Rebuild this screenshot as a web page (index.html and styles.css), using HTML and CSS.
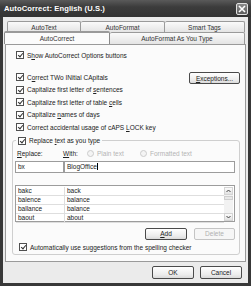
FILE: index.html
```html
<!DOCTYPE html>
<html lang="en">
<head>
  <meta charset="UTF-8">
  <title>AutoCorrect: English (U.S.)</title>
  <link rel="stylesheet" href="styles.css">
</head>
<body>
  <div class="window">
    <div class="titlebar">
      <span class="title">AutoCorrect: English (U.S.)</span>
      <span class="close">
        <svg width="8" height="8" viewBox="0 0 8 8"><path d="M1 1 L7 7 M7 1 L1 7" stroke="#fff" stroke-width="1.6"/></svg>
      </span>
    </div>

    <div class="client">
      <div class="tabrow back">
        <div class="tab t-autotext">AutoText</div>
        <div class="tab t-autoformat">AutoFormat</div>
        <div class="tab t-smarttags">Smart Tags</div>
      </div>
      <div class="tabrow front">
        <div class="tab t-autocorrect active">AutoCorrect</div>
        <div class="tab t-asyoutype">AutoFormat As You Type</div>
      </div>

      <div class="panel">
        <div class="check first"><span class="box on"></span><span>S<u>h</u>ow AutoCorrect Options buttons</span></div>

        <div class="opts">
          <div class="opt-list">
            <div class="check"><span class="box on"></span><span>C<u>o</u>rrect TWo INitial CApitals</span></div>
            <div class="check"><span class="box on"></span><span>Capitalize first letter of <u>s</u>entences</span></div>
            <div class="check"><span class="box on"></span><span>Capitalize first letter of table <u>c</u>ells</span></div>
            <div class="check"><span class="box on"></span><span>Capitalize <u>n</u>ames of days</span></div>
            <div class="check"><span class="box on"></span><span>Correct accidental usage of cAPS <u>L</u>OCK key</span></div>
          </div>
          <button class="btn exceptions"><span><u>E</u>xceptions...</span></button>
        </div>

        <fieldset class="group">
          <legend class="check"><span class="box on"></span><span>Replace <u>t</u>ext as you type</span></legend>

          <div class="labels">
            <span class="lbl-replace"><u>R</u>eplace:</span>
            <span class="lbl-with"><u>W</u>ith:</span>
            <span class="radio"><span class="dot"></span><span>Plain text</span></span>
            <span class="radio"><span class="dot"></span><span>Formatted text</span></span>
          </div>

          <div class="inputs">
            <div class="field f-key">bx</div>
            <div class="field f-val"><span>BlogOffice</span><span class="caret"></span></div>
          </div>

          <div class="list">
            <div class="rows">
              <div class="row"><span class="c1">bakc</span><span class="c2">back</span></div>
              <div class="row"><span class="c1">balence</span><span class="c2">balance</span></div>
              <div class="row"><span class="c1">ballance</span><span class="c2">balance</span></div>
              <div class="row"><span class="c1">baout</span><span class="c2">about</span></div>
            </div>
            <div class="scrollbar">
              <span class="arrow">
                <svg width="5" height="4" viewBox="0 0 5 4"><path d="M0.5 3 L2.5 1 L4.5 3" fill="none" stroke="#444" stroke-width="1"/></svg>
              </span>
              <span class="thumb"></span>
              <span class="track"></span>
              <span class="arrow">
                <svg width="5" height="4" viewBox="0 0 5 4"><path d="M0.5 1 L2.5 3 L4.5 1" fill="none" stroke="#444" stroke-width="1"/></svg>
              </span>
            </div>
          </div>

          <div class="list-buttons">
            <button class="btn"><span><u>A</u>dd</span></button>
            <button class="btn disabled">Delete</button>
          </div>

          <div class="check auto"><span class="box on"></span><span>Automatically use suggestions from the spelling checker</span></div>
        </fieldset>
      </div>

      <div class="dialog-buttons">
        <button class="btn">OK</button>
        <button class="btn">Cancel</button>
      </div>
    </div>
  </div>
</body>
</html>
```

FILE: styles.css
```css
body {
  margin: 0;
  padding: 0;
  background: #ffffff;
  font-family: "Liberation Sans", Arial, sans-serif;
  font-size: 6.5px;
  color: #222;
}

.window {
  width: 251px;
  height: 286px;
  background: #383838;
  display: flex;
  flex-direction: column;
  box-sizing: border-box;
}

/* title bar */
.titlebar {
  height: 17px;
  display: flex;
  align-items: center;
  justify-content: space-between;
  padding: 0 3px 0 4px;
  background: linear-gradient(#5a5a5a, #3c3c3c 40%, #333333);
}

.title {
  color: #ffffff;
  font-weight: bold;
  font-size: 7.6px;
  letter-spacing: 0.1px;
}

.close {
  width: 12px;
  height: 12px;
  box-sizing: border-box;
  border: 1px solid #e0e0e0;
  border-radius: 2px;
  background: linear-gradient(#8a8a8a, #5e5e5e);
  display: flex;
  align-items: center;
  justify-content: center;
}

/* client area */
.client {
  flex: 1;
  margin: 0 3px 3px;
  padding-top: 4px;
  background: #ebebeb;
  display: flex;
  flex-direction: column;
}

.tabrow {
  display: flex;
  height: 11px;
}

.tabrow.back {
  padding-left: 4px;
}

.tabrow.front {
  height: 12px;
  padding-left: 1px;
  position: relative;
  z-index: 1;
}

.tab {
  box-sizing: border-box;
  height: 100%;
  display: flex;
  align-items: center;
  justify-content: center;
  border: 1px solid #9a9a9a;
  border-bottom: none;
  border-radius: 2px 2px 0 0;
  background: linear-gradient(#fafafa, #e4e4e4);
  color: #333;
}

.tab + .tab {
  border-left: none;
}

.t-autotext { width: 74px; }
.t-autoformat { width: 84px; }
.t-smarttags { width: 80px; }
.t-autocorrect { width: 106px; }
.t-asyoutype { width: 135px; }

.tab.active {
  background: #fbfbfb;
  height: 13px;
  margin-top: -1px;
  border-color: #8a8a8a;
  border-top: 2px solid #9a9a9a;
}

/* main tab panel */
.panel {
  height: 218px;
  margin: 0 2px;
  box-sizing: border-box;
  border: 1px solid #9a9a9a;
  background: #fbfbfb;
  padding: 4px 5px 0 6px;
  display: flex;
  flex-direction: column;
}

.check {
  display: flex;
  align-items: center;
  height: 12.5px;
  padding-left: 4px;
  white-space: nowrap;
}

.check.first {
  height: 12px;
}

.box {
  width: 8px;
  height: 8px;
  box-sizing: border-box;
  border: 1px solid #505050;
  background: #ffffff;
  margin-right: 3px;
  position: relative;
  flex: none;
}

.box.on::after {
  content: "";
  position: absolute;
  left: 2px;
  top: 0px;
  width: 2px;
  height: 4px;
  border: solid #333;
  border-width: 0 1.2px 1.2px 0;
  transform: rotate(40deg);
}

.opts {
  display: flex;
  justify-content: space-between;
  align-items: flex-start;
  margin-top: 10px;
}

.btn {
  font-family: "Liberation Sans", Arial, sans-serif;
  font-size: 6.5px;
  color: #222;
  height: 12px;
  padding: 0;
  box-sizing: border-box;
  border: 1px solid #4a4a4a;
  border-radius: 2px;
  background: linear-gradient(#ffffff, #ececec 70%, #dadada);
  display: flex;
  align-items: center;
  justify-content: center;
}

.btn.disabled {
  border-color: #c4c4c4;
  color: #b0b0b0;
  background: #f6f6f6;
}

.exceptions {
  width: 51px;
  margin-top: 1px;
}

/* replace group */
.group {
  margin: 1px 0 0 0;
  padding: 0 4px 0 2px;
  border: 1px solid #cfcfcf;
  border-radius: 3px;
  min-width: 0;
}

.group legend.check {
  padding: 0 2px 0 2px;
  margin-left: 1px;
  height: 12px;
}

.labels {
  display: flex;
  align-items: center;
  height: 12px;
  margin-top: 1px;
}

.lbl-replace {
  margin-left: 2px;
  width: 46px;
}

.lbl-with {
  width: 24px;
}

.radio {
  display: flex;
  align-items: center;
  color: #b4b4b4;
  width: 53px;
}

.dot {
  width: 7px;
  height: 7px;
  box-sizing: border-box;
  border: 1px solid #cccccc;
  border-radius: 50%;
  background: #f4f4f4;
  margin-right: 3px;
}

.inputs {
  display: flex;
  height: 12px;
  margin-top: 1px;
}

.field {
  box-sizing: border-box;
  height: 100%;
  border: 1px solid #9c9c9c;
  background: #ffffff;
  display: flex;
  align-items: center;
  padding-left: 2px;
}

.f-key {
  width: 49px;
}

.f-val {
  flex: 1;
}

.caret {
  width: 1px;
  height: 7px;
  background: #000;
}

.list {
  display: flex;
  margin-top: 12px;
  height: 37px;
  box-sizing: border-box;
  border: 1px solid #9c9c9c;
  background: #ffffff;
  padding: 1px 1px 0 0;
}

.rows {
  flex: 1;
}

.row {
  display: flex;
  height: 9px;
  box-sizing: border-box;
  border-bottom: 1px solid #dedede;
  align-items: center;
}

.c1 {
  width: 49px;
  box-sizing: border-box;
  padding-left: 2px;
  height: 100%;
  display: flex;
  align-items: center;
  border-right: 1px solid #dedede;
}

.c2 {
  padding-left: 2px;
}

.scrollbar {
  width: 9px;
  display: flex;
  flex-direction: column;
  background: #f2f2f2;
}

.arrow {
  height: 8px;
  box-sizing: border-box;
  border: 1px solid #d4d4d4;
  background: linear-gradient(#fbfbfb, #e2e2e2);
  display: flex;
  align-items: center;
  justify-content: center;
}

.thumb {
  height: 4px;
  margin-top: 1px;
  box-sizing: border-box;
  border: 1px solid #cfcfcf;
  background: #e8e8e8;
}

.track {
  flex: 1;
}

.list-buttons {
  display: flex;
  justify-content: flex-end;
  gap: 7px;
  margin-top: 6px;
}

.list-buttons .btn:first-child {
  width: 42px;
}

.list-buttons .btn:last-child {
  width: 41px;
}

.check.auto {
  height: 11px;
  margin-top: 2px;
  margin-bottom: 1px;
}

/* OK / Cancel */
.dialog-buttons {
  display: flex;
  justify-content: flex-end;
  gap: 6px;
  margin-top: 4px;
  padding-right: 6px;
}

.dialog-buttons .btn {
  width: 42px;
  height: 13px;
}
```
